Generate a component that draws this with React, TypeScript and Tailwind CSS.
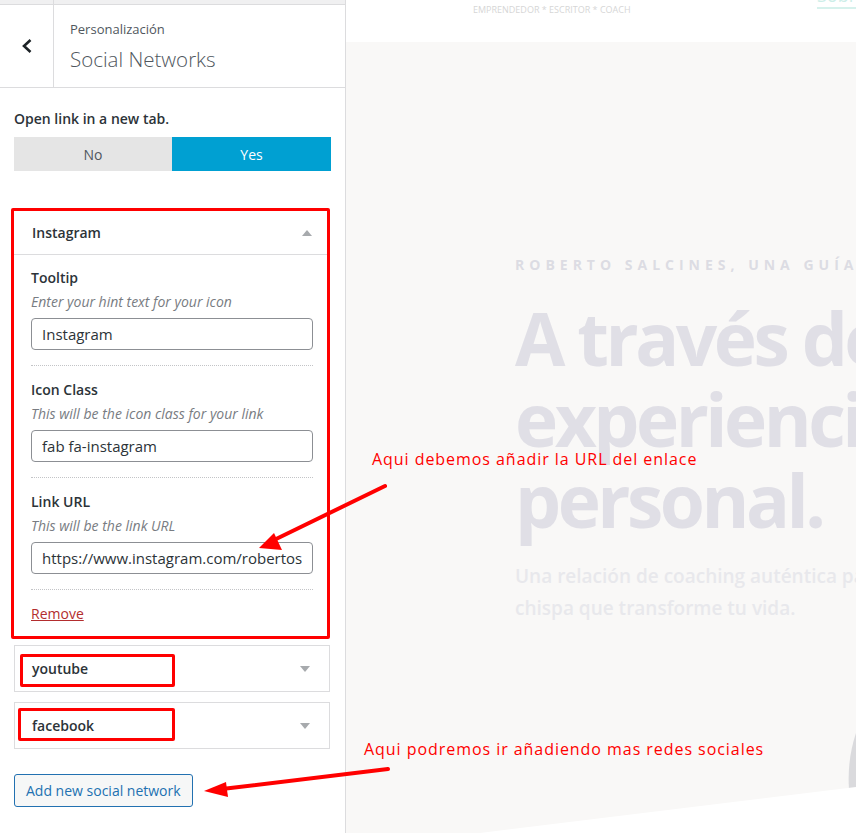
import React from "react";

function Field({ label, desc, value }: { label: string; desc: string; value: string }) {
  return (
    <div>
      <div className="text-[14px] font-semibold leading-[20px] text-[#2c3338]">{label}</div>
      <div className="mt-[4px] text-[14px] italic leading-[20px] text-[#787c82]">{desc}</div>
      <div className="mt-[6px] flex h-[32px] items-center rounded-[4px] border border-[#8c8f94] bg-white px-[10px] text-[15px] text-[#2c3338]">
        <div className="w-full overflow-hidden whitespace-nowrap">{value}</div>
      </div>
      <div className="mt-[15px] border-t border-dotted border-[#c3c4c7]" />
    </div>
  );
}

function Tri({ up }: { up?: boolean }) {
  return (
    <svg width="10" height="6" viewBox="0 0 10 6" className="shrink-0">
      {up ? <polygon points="0,6 10,6 5,0" fill="#a7aaad" /> : <polygon points="0,0 10,0 5,6" fill="#a7aaad" />}
    </svg>
  );
}

function Collapsed({ name, box }: { name: string; box: string }) {
  return (
    <div className="relative flex h-[47px] w-[316px] items-center justify-between border border-[#dcdcde] bg-white pl-[17px] pr-[19px]">
      <span className="text-[14px] font-semibold text-[#2c3338]">{name}</span>
      <Tri />
      <div className={"absolute h-[33px] rounded-[2px] border-[3px] border-[#ff0000] " + box} />
    </div>
  );
}

export default function App() {
  return (
    <div className="relative flex h-[833px] w-[856px] overflow-hidden bg-white font-['Open_Sans',sans-serif]">
      <aside className="flex w-[346px] shrink-0 flex-col border-r border-[#dcdcde] bg-white">
        <div className="flex h-[88px] border-b border-[#dcdcde]">
          <div className="flex w-[54px] flex-col border-r border-[#dcdcde]">
            <div className="h-[5px] border-b border-[#dcdcde] bg-[#f0f0f1]" />
            <div className="flex flex-1 items-center justify-center">
              <svg width="12" height="16" viewBox="0 0 12 16">
                <polyline points="9.5,2 3,8 9.5,14" fill="none" stroke="#1d2327" strokeWidth="2.6" />
              </svg>
            </div>
          </div>
          <div className="flex flex-1 flex-col">
            <div className="h-[5px] border-b border-[#dcdcde] bg-[#f0f0f1]" />
            <div className="pl-[16px] pt-[15px]">
              <div className="text-[13px] leading-[18px] text-[#50575e]">Personalización</div>
              <div className="mt-[7px] text-[20.5px] font-light leading-[28px] text-[#50575e]">Social Networks</div>
            </div>
          </div>
        </div>

        <div className="px-[14px] pt-[21px]">
          <div className="text-[14px] font-semibold leading-[20px] text-[#2c3338]">Open link in a new tab.</div>
          <div className="mt-[8px] flex h-[34px] text-[14px]">
            <div className="flex w-[158px] items-center justify-center bg-[#e5e5e5] text-[#50575e]">No</div>
            <div className="flex flex-1 items-center justify-center bg-[#00a0d2] text-white">Yes</div>
          </div>

          <div className="ml-[-3px] mt-[37px] w-[319px] rounded-[2px] border-[3px] border-[#ff0000] bg-white">
            <div className="flex h-[44px] items-center justify-between border-b border-[#dcdcde] pl-[18px] pr-[15px]">
              <span className="text-[14px] font-semibold text-[#2c3338]">Instagram</span>
              <Tri up />
            </div>
            <div className="flex flex-col gap-[14px] pb-[12px] pl-[17px] pr-[14px] pt-[13px]">
              <Field label="Tooltip" desc="Enter your hint text for your icon" value="Instagram" />
              <Field label="Icon Class" desc="This will be the icon class for your link" value="fab fa-instagram" />
              <Field label="Link URL" desc="This will be the link URL" value="https://www.instagram.com/robertosalcines" />
              <div className="text-[14px] leading-[20px] text-[#b32d2e] underline">Remove</div>
            </div>
          </div>

          <div className="mt-[6px]">
            <Collapsed name="youtube" box="left-[5px] top-[8px] w-[155px]" />
          </div>
          <div className="mt-[10px]">
            <Collapsed name="facebook" box="left-[3px] top-[5px] w-[157px]" />
          </div>

          <button className="mt-[25px] h-[33px] rounded-[3px] border border-[#2271b1] bg-[#f6f7f7] px-[11px] text-[14px] text-[#2271b1]">
            Add new social network
          </button>
        </div>
      </aside>

      <main className="relative flex flex-1 flex-col overflow-hidden bg-[#f9f8f7]">
        <div className="flex h-[42px] shrink-0 justify-between bg-white">
          <div className="pl-[127px] pt-[4px] text-[9px] leading-[12px] text-[#d6d6d6]">
            EMPRENDEDOR * ESCRITOR * COACH
          </div>
          <div className="mr-[-36px] mt-[-16px] h-[25px] border-b-2 border-[#d6f1ec] text-[18px] leading-[22px] text-[#cdeee8]">
            Sobre mí
          </div>
        </div>
        <div className="whitespace-nowrap pl-[169px] pt-[213px]">
          <div className="text-[14px] font-bold leading-[20px] tracking-[5px] text-[#dcdce3]">
            ROBERTO SALCINES, UNA GUÍA PARA TU CAMINO
          </div>
          <div className="mt-[22px] text-[73px] font-bold leading-[81px] tracking-[-3.5px] text-[#e0dfe6]">
            A través de la
            <br />
            experiencia
            <br />
            personal.
          </div>
          <div className="mt-[20px] text-[19px] font-semibold leading-[32px] text-[#e8e8ec]">
            Una relación de coaching auténtica para encender la
            <br />
            chispa que transforme tu vida.
          </div>
        </div>
        <svg className="absolute inset-0 h-full w-full" viewBox="0 0 510 833" preserveAspectRatio="none">
          <path d="M510 733 Q501 760 503 789 L510 789 Z" fill="#dadadd" />
          <polygon points="134,833 510,787 510,833" fill="#ffffff" />
        </svg>
      </main>

      <svg className="pointer-events-none absolute inset-0" width="856" height="833" viewBox="0 0 856 833">
        <line x1="385" y1="486" x2="272" y2="541" stroke="#ff0000" strokeWidth="4" strokeLinecap="round" />
        <polygon points="259,548 274,533 282,550" fill="#ff0000" />
        <line x1="388" y1="769" x2="222" y2="789" stroke="#ff0000" strokeWidth="4" strokeLinecap="round" />
        <polygon points="204,791 226,782 228,797" fill="#ff0000" />
      </svg>
      <div className="pointer-events-none absolute left-[372px] top-[448px] text-[16px] leading-[22px] tracking-[0.95px] text-[#ff0000]">
        Aqui debemos añadir la URL del enlace
      </div>
      <div className="pointer-events-none absolute left-[364px] top-[738px] text-[16px] leading-[22px] tracking-[0.95px] text-[#ff0000]">
        Aqui podremos ir añadiendo mas redes sociales
      </div>
    </div>
  );
}
